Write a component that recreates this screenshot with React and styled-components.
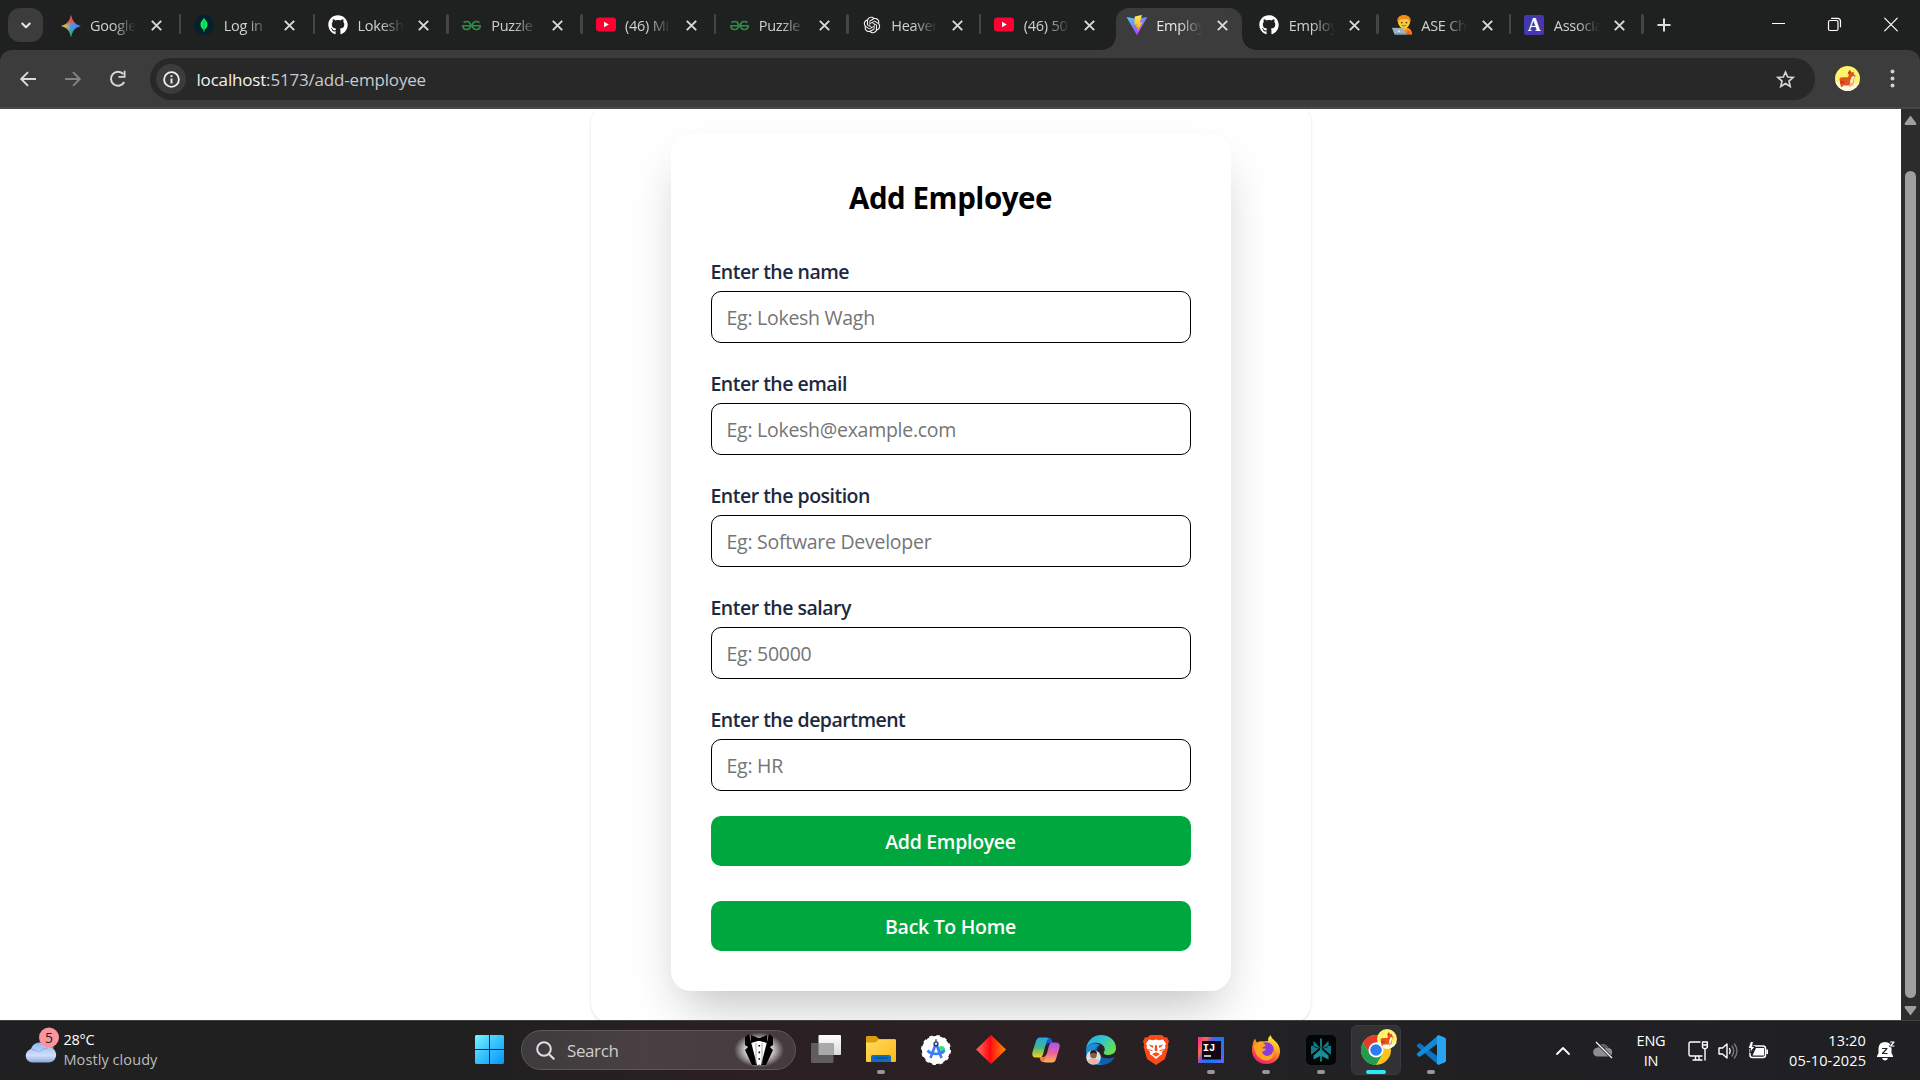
import React from "react";
import styled, { createGlobalStyle, css } from "styled-components";
import { FaGithub } from "react-icons/fa";
import { SiGeeksforgeeks } from "react-icons/si";
import { RiOpenaiFill } from "react-icons/ri";

const GlobalStyle = createGlobalStyle`
  * { box-sizing: border-box; }
  body { margin: 0; background: #fff; overflow: hidden; }
  body, input, button { font-family: "Open Sans", "Noto Sans", sans-serif; }
  svg { display: block; flex: none; overflow: visible; }
`;

const Screen = styled.div`
  display: flex;
  flex-direction: column;
  width: 1920px;
  height: 1080px;
  overflow: hidden;
`;

/* ---------- Tab strip ---------- */

const TabStrip = styled.header`
  display: flex;
  height: 50px;
  flex: none;
  background: #1f2120;
`;

const TabSearch = styled.div`
  display: grid;
  place-items: center;
  width: 35px;
  height: 34px;
  margin: 8px 3.5px 0 8px;
  border-radius: 12px;
  background: #3c3c3c;
`;

const Tab = styled.div`
  position: relative;
  display: flex;
  align-items: flex-start;
  width: ${(p) => p.$width}px;
  height: 50px;
  padding: 15px 0 0 14px;
  flex: none;

  ${(p) =>
    p.$active &&
    css`
      z-index: 1;
      &::before {
        content: "";
        position: absolute;
        z-index: -1;
        inset: 7.5px 3px 0 3px;
        border-radius: 13px 13px 0 0;
        background: #3c3c3c;
      }
    `}
`;

const Flare = styled.i`
  position: absolute;
  bottom: 0;
  ${(p) => p.$side}: -11px;
  width: 14px;
  height: 14px;
  background: radial-gradient(
    circle at ${(p) => (p.$side === "left" ? "0 0" : "100% 0")},
    transparent 13.5px,
    #3c3c3c 14px
  );
`;

const Favicon = styled.span`
  display: grid;
  place-items: center;
  width: 20px;
  height: 20px;
`;

const TabTitle = styled.span`
  width: 46px;
  margin: 1px 0 0 9.5px;
  white-space: nowrap;
  font-size: 14.5px;
  line-height: 20px;
  letter-spacing: -0.25px;
  color: ${(p) => (p.$active ? "#e8e8e8" : "#cfd0d0")};
  mask-image: linear-gradient(90deg, #000 50%, transparent 100%);
`;

const TabClose = styled.span`
  width: 11px;
  margin: 4.5px 0 0 14.5px;
`;

const Separator = styled.i`
  position: absolute;
  top: 14px;
  right: -1px;
  width: 2.5px;
  height: 20px;
  border-radius: 2px;
  background: #444645;
`;

const NewTab = styled.div`
  margin: 18px 0 0 14px;
`;

const WindowControls = styled.div`
  display: flex;
  gap: 43px;
  margin: 17px 22.5px 0 auto;
`;

/* ---------- Toolbar ---------- */

const ToolbarWrap = styled.div`
  flex: none;
  background: #1f2120;
`;

const Toolbar = styled.nav`
  display: flex;
  align-items: flex-start;
  height: 59px;
  padding: 8px 22px 0 17.5px;
  border-radius: 12px 12px 0 0;
  border-bottom: 2px solid #494747;
  background: #3c3c3c;
`;

const NavButtons = styled.div`
  display: flex;
  align-items: center;
  gap: 25px;
  width: 132.5px;
  height: 42px;
`;

const UrlBar = styled.div`
  display: flex;
  align-items: center;
  width: 1664.5px;
  height: 42px;
  padding: 0 20px 0 6px;
  border-radius: 21px;
  background: #282828;
`;

const SiteInfo = styled.span`
  display: grid;
  place-items: center;
  width: 30px;
  height: 30px;
  border-radius: 50%;
  background: #3c3c3c;
`;

const Url = styled.span`
  margin-left: 10.5px;
  padding-top: 2px;
  flex: 1;
  font-size: 17px;
  line-height: 24px;
  letter-spacing: -0.18px;
  color: #c6cbd3;

  b { font-weight: 400; color: #f2f2f2; }
`;

const ProfileButton = styled.span`
  margin: 7.5px 0 0 20.5px;
`;

const MenuButton = styled.span`
  margin: 11px 0 0 auto;
  padding-right: 3px;
`;

/* ---------- Page ---------- */

const Viewport = styled.main`
  display: flex;
  height: 911px;
  flex: none;
  overflow: hidden;
`;

const Page = styled.div`
  display: flex;
  justify-content: center;
  align-items: flex-start;
  width: 1901px;
  overflow: hidden;
  background: #fff;
`;

const OuterCard = styled.section`
  width: 720px;
  height: 920px;
  margin-top: -6px;
  padding: 31px 80px;
  border-radius: 20px;
  background: #fff;
  box-shadow: 0 1px 3px rgba(0, 0, 0, 0.12), 0 1px 2px -1px rgba(0, 0, 0, 0.1);
`;

const Card = styled.form`
  display: flex;
  flex-direction: column;
  height: 857px;
  padding: 40px;
  border-radius: 20px;
  background: #fff;
  box-shadow: 0 25px 50px -12px rgba(0, 0, 0, 0.25);
`;

const Title = styled.h1`
  flex: none;
  height: 40px;
  margin: 4px 0 39px;
  font-size: 29.5px;
  line-height: 40px;
  font-weight: 700;
  letter-spacing: -0.45px;
  text-align: center;
  color: #000;
`;

const Field = styled.div`
  display: flex;
  flex: none;
  flex-direction: column;
  margin-bottom: ${(p) => (p.$last ? 25 : 26)}px;
`;

const Label = styled.label`
  height: 34px;
  padding-top: 1px;
  font-size: 19.5px;
  line-height: 28px;
  font-weight: 600;
  letter-spacing: -0.51px;
  color: #1d293d;
`;

const Input = styled.input`
  height: 52px;
  padding: 0 15px;
  border: 1.25px solid #000;
  border-radius: 10px;
  outline: none;
  background: #fff;
  font-size: 19.5px;
  letter-spacing: -0.27px;

  &::placeholder { color: #757575; opacity: 1; }
`;

const Button = styled.button`
  flex: none;
  height: 50px;
  margin: 0 0 35px;
  padding: 1px 0 0;
  border: 0;
  border-radius: 10px;
  background: #00a63e;
  font-size: 19.5px;
  font-weight: 600;
  letter-spacing: -0.3px;
  color: #fff;

  &:last-child { margin-bottom: 0; }
`;

const ScrollTrack = styled.aside`
  display: flex;
  flex-direction: column;
  align-items: center;
  width: 19px;
  padding: 6px 0 4px;
  background: #2c2c2c;
`;

const ScrollThumb = styled.div`
  width: 11px;
  height: 827px;
  margin: 46px 0 8px;
  border-radius: 6px;
  background: #9f9f9f;
`;

/* ---------- Taskbar ---------- */

const Taskbar = styled.footer`
  display: flex;
  height: 60px;
  flex: none;
  border-top: 1px solid #414143;
  background: linear-gradient(
    90deg,
    #202022 0,
    #202021 480px,
    #2b1f22 720px,
    #2a2024 860px,
    #2b2023 1060px,
    #222124 1260px,
    #202023 1500px,
    #202025 1700px,
    #202023 100%
  );
`;

const Weather = styled.div`
  display: flex;
  width: 461.5px;
  padding: 6px 0 0 24.5px;
  gap: 5px;
`;

const WeatherText = styled.div`
  padding-top: 3px;
  font-size: 14.5px;
  line-height: 20px;
  letter-spacing: 0.08px;
  color: #bdbdbe;

  strong { display: block; font-weight: 400; letter-spacing: -0.3px; color: #fff; }
`;

const TaskSlot = styled.div`
  position: relative;
  display: flex;
  justify-content: center;
  align-items: flex-start;
  width: 55px;
  padding-top: 14px;

  ${(p) =>
    p.$state === "active" &&
    css`
      height: 50px;
      width: 50px;
      margin: 4px 2.5px 0;
      border: 1px solid #3b393c;
      border-radius: 6px;
      background: #333134;
      padding-top: 9px;
    `}

  &::after {
    content: "";
    display: ${(p) => (p.$state ? "block" : "none")};
    position: absolute;
    left: 50%;
    top: ${(p) => (p.$state === "active" ? 44 : 49)}px;
    width: ${(p) => (p.$state === "active" ? 20 : 8)}px;
    height: 4px;
    transform: translateX(-50%);
    border-radius: 2px;
    background: ${(p) => (p.$state === "active" ? "#29e8fb" : "#98969a")};
  }
`;

const AvatarBadge = styled.span`
  position: absolute;
  top: 3px;
  right: 3px;
`;

const SearchBox = styled.div`
  display: flex;
  align-items: center;
  width: 275px;
  height: 40px;
  margin: 9px 2.5px 0 4.5px;
  padding: 0 17px 0 14px;
  border: 1px solid #605759;
  border-radius: 20px;
  background: linear-gradient(90deg, #3c3b3d, #4a4043 45%, #453a3d);
`;

const SearchLabel = styled.span`
  flex: 1;
  margin-left: 12px;
  font-size: 17px;
  letter-spacing: -0.4px;
  color: #d0cdce;
`;

const Tray = styled.div`
  display: flex;
  align-items: center;
  margin-left: auto;
  padding-right: 25px;
  color: #fff;
`;

const TrayItem = styled.span`
  margin-right: ${(p) => p.$gap}px;
`;

const TrayText = styled.div`
  width: ${(p) => p.$width}px;
  margin-right: ${(p) => p.$gap}px;
  font-size: 14.5px;
  line-height: 20px;
  letter-spacing: ${(p) => p.$spacing}px;
  text-align: ${(p) => p.$align};
  white-space: nowrap;
`;

/* ---------- Icons ---------- */

const line = { fill: "none", stroke: "currentColor", strokeLinecap: "round", strokeLinejoin: "round" };

const Gemini = () => (
  <svg width="20" height="22" viewBox="0 0 20 22">
    <defs>
      <linearGradient id="gm" x1="0" y1="0.5" x2="1" y2="0.5">
        <stop offset="0" stopColor="#fcc818" />
        <stop offset=".25" stopColor="#c4bf45" />
        <stop offset=".5" stopColor="#4a95ee" />
        <stop offset="1" stopColor="#3a80fb" />
      </linearGradient>
      <linearGradient id="gm2" x1="0" y1="0" x2="0" y2="1">
        <stop offset="0" stopColor="#f5453a" />
        <stop offset=".3" stopColor="#f5504a" />
        <stop offset=".46" stopColor="#ee5c50" stopOpacity="0" />
        <stop offset=".62" stopColor="#20b45c" stopOpacity="0" />
        <stop offset=".85" stopColor="#20b45c" />
      </linearGradient>
    </defs>
    {["url(#gm)", "url(#gm2)"].map((fill) => (
      <path key={fill} fill={fill} d="M10 0c1.200 6 4 9.500 10 11-6 1.500-8.800 5-10 11C8.800 16 6 12.500 0 11 6 9.500 8.800 6 10 0z" />
    ))}
  </svg>
);

const Mongo = () => (
  <svg width="20" height="20" viewBox="0 0 20 20">
    <circle cx="10" cy="10" r="10" fill="#04202d" />
    <path d="M10 2.800c.7 2 3.700 3.300 3.500 7.200-.2 3-2.400 4.300-3.100 5l-.2 2.200h-.4L9.600 15C8.900 14.300 6.700 13 6.500 10 6.300 6.100 9.300 4.800 10 2.800z" fill="#0cec62" />
    <path d="M10 5v11.500" stroke="#06a34a" strokeWidth=".6" />
  </svg>
);

const YouTube = () => (
  <svg width="20" height="16" viewBox="0 0 20 16">
    <rect y=".5" width="20" height="14" rx="3.2" fill="#ff0033" />
    <path d="M8 4.700 12.800 7.500 8 10.300z" fill="#fff" />
  </svg>
);

const Vite = () => (
  <svg width="20" height="20" viewBox="0 0 32 32">
    <defs>
      <linearGradient id="vt1" x1="0" y1="0" x2=".6" y2="1">
        <stop offset="0" stopColor="#41d1ff" />
        <stop offset="1" stopColor="#bd34fe" />
      </linearGradient>
      <linearGradient id="vt2" x1="0" y1="0" x2="0" y2="1">
        <stop offset="0" stopColor="#ffea83" />
        <stop offset=".2" stopColor="#ffdd35" />
        <stop offset="1" stopColor="#ffa800" />
      </linearGradient>
    </defs>
    <path fill="url(#vt1)" d="M31.600 4.700 16.800 31.200a.9.900 0 0 1-1.600 0L.1 4.700c-.4-.7.200-1.500 1-1.300l14.900 2.700 14.500-2.700c.9-.2 1.500.6 1.100 1.300z" />
    <path fill="url(#vt2)" d="M23.500 0 12.500 2.200l-.8 12.600c0 .4.400.7.800.6l3-.7-1 5.300 3.100-.8-1.300 7.800 8.500-15.500-4.300.8L23.800.5z" />
  </svg>
);

const Coder = () => (
  <svg width="20" height="20" viewBox="0 0 20 20">
    <path d="M5 18c0-4 3-6 7-6s8 2 8 7.500H7z" fill="#ff8a1f" />
    <path d="M10 11h5v3l-2.500 1.500L10 14z" fill="#f7b62d" />
    <ellipse cx="12" cy="7.300" rx="6" ry="5.800" fill="#fccb3c" />
    <path d="M5.300 7C4.800 2.500 8 0 12 0s7.400 2.500 6.700 7C17.500 4.500 15 4 12.500 4 9 4.200 6.500 5 5.300 7z" fill="#f08a19" />
    <circle cx="9.700" cy="7.600" r=".9" fill="#5b3a20" />
    <circle cx="14.500" cy="7.600" r=".9" fill="#5b3a20" />
    <path d="M10 10.300q2 1.400 4 0" fill="none" stroke="#b5541c" strokeWidth=".9" />
    <path d="m0 12.700 11.500.3L14 19.500H2.500z" fill="#9fb3be" />
    <path d="M2.500 18.600H15v1.400H3z" fill="#63869a" />
    <circle cx="7" cy="16.200" r="1" fill="#e7eff3" />
    <circle cx="16.500" cy="17.500" r="1.800" fill="#fb5a2e" />
  </svg>
);

const LetterTile = styled.span`
  display: grid;
  place-items: center;
  width: 20px;
  height: 20px;
  border-radius: 2px;
  background: #4338ac;
  color: #fff;
  font: 700 18px/20px "Liberation Serif", serif;
`;

const Corgi = ({ size }) => (
  <svg width={size} height={size} viewBox="0 0 25 25">
    <defs><clipPath id="corgiClip"><circle cx="12.500" cy="12.500" r="12.500" /></clipPath></defs>
    <g clipPath="url(#corgiClip)">
      <path fill="#fff36b" d="M0 0h25v25H0z" />
      <path fill="#faf8e8" d="M0 15.500c5 0 7 3 12 3s8-1 13-2v9H0z" />
      <path fill="#e2571d" d="M4.500 12.500q1-1.200 3-1.200h5.500l1-2.800-1-2 2-2.500 1 2.500 2.500-.7.500 2.700 1.700 1.500-1.700 3-1 5-4 1.500H8l-.7 1.500H6L5.200 18z" />
      <path fill="#c93f14" d="m15 4 1 2.500-2.500 2.200-.5-2.200zM5 14.500l5 1-.5 2H5.500z" />
      <path fill="#fff3e2" d="m17 10.200 3.200.3-1.400 2-1.300 4.500-2.500 1.500.3-4z" />
      <path fill="#e9b07c" d="M14.500 17.500h1.800v3.500h-1.800zM17 16.500h1.500v3H17z" />
    </g>
  </svg>
);

const CloseIcon = () => (
  <svg width="11" height="11" viewBox="0 0 11 11" color="#d9dada">
    <path {...line} strokeWidth="1.900" strokeLinecap="butt" d="m.8.8 9.400 9.400M10.200.8.8 10.200" />
  </svg>
);

const Windows = () => (
  <svg width="29" height="29" viewBox="0 0 29 29">
    <defs>
      <linearGradient id="win" x1="0" y1="0" x2="29" y2="29" gradientUnits="userSpaceOnUse">
        <stop offset="0" stopColor="#7af3ff" />
        <stop offset=".5" stopColor="#36c1fb" />
        <stop offset="1" stopColor="#0a93fb" />
      </linearGradient>
    </defs>
    <path fill="url(#win)" d="M1 0h13v14H0V1zM15 0h13l1 1v13H15zM0 15h14v14H1l-1-1zM15 15h14v13l-1 1H15z" />
  </svg>
);

const SearchIcon = () => (
  <svg width="19" height="19" viewBox="0 0 19 19" color="#e0dedf">
    <circle {...line} cx="8" cy="8" r="6.800" strokeWidth="2" />
    <path {...line} strokeWidth="2.200" d="m13 13.200 4.700 4.600" />
  </svg>
);

const Tuxedo = () => (
  <svg width="38" height="34" viewBox="0 0 38 34">
    <defs>
      <radialGradient id="glow">
        <stop offset=".45" stopColor="#fff" stopOpacity=".9" />
        <stop offset="1" stopColor="#fff" stopOpacity="0" />
      </radialGradient>
    </defs>
    <ellipse cx="19" cy="17" rx="25" ry="17.500" fill="url(#glow)" />
    <path fill="#fff" d="M12 6h14l-3 26h-8z" />
    <path fill="#000" d="m9 1-4 3v8l3 2-3 3 7 15h5L11 9zM29 1l4 3v8l-3 2 3 3-7 15h-5l6-23z" />
    <path fill="#000" d="m11 2 7 3h2l7-3v8l-7-2h-2l-7 2z" />
    <path stroke="#888" strokeWidth=".7" d="M16 10v21M22 10v21" />
    <path stroke="#000" strokeWidth="1.600" strokeDasharray="1.600 5" d="M19.300 12v20" />
  </svg>
);

const TaskView = () => (
  <svg width="30" height="28" viewBox="0 0 30 28">
    <defs>
      <linearGradient id="tv" x1="0" y1="0" x2="0" y2="1">
        <stop offset="0" stopColor="#fff" /><stop offset="1" stopColor="#d9d9d9" />
      </linearGradient>
    </defs>
    <rect x="7.500" width="22.500" height="20" rx="1" fill="url(#tv)" />
    <rect y="8" width="22.500" height="20" rx="1" fill="#5f5d5e" />
    <path d="M7.500 8h15v12h-15z" fill="#aaa9a9" />
  </svg>
);

const Explorer = () => (
  <svg width="30" height="28" viewBox="0 0 30 28">
    <defs>
      <linearGradient id="ex" x1="0" y1="0" x2="1" y2="1">
        <stop offset="0" stopColor="#ffdc62" /><stop offset="1" stopColor="#fdb813" />
      </linearGradient>
    </defs>
    <g transform="translate(0 1)">
      <path fill="#dd9c09" d="M0 1.200Q0 0 1.200 0H10l3.500 3.300H29V10H0z" />
      <path fill="url(#ex)" d="M0 6.500h9.500L13 3.300h16q1 0 1 1V25q0 1-1 1H1q-1 0-1-1z" />
      <path fill="#0b6fc2" d="M5 26v-5q0-2 2-2h16q2 0 2 2v5z" />
      <path stroke="#05488c" strokeWidth="1.300" d="M8.500 22h13" />
    </g>
  </svg>
);

const AndroidStudio = () => (
  <svg width="30" height="30" viewBox="0 0 30 30">
    <circle cx="15" cy="15" r="14" fill="#fff" />
    <circle cx="15" cy="15" r="14" fill="none" stroke="#fff" strokeWidth="2" strokeDasharray="3.600 3.730" />
    <path fill="#3ddc84" d="M17 13c3-3.500 7-2 7.200 2 0 3-2.500 5-4.700 3.500z" />
    <path stroke="#3d7df5" strokeWidth="2.700" fill="none" d="m14.500 9.500-5 13.500M15.500 9.500l5 13.500M6.500 15.500c4 4.500 13 4.500 17 0" />
    <circle cx="15" cy="8.800" r="2" fill="#cfe1fb" stroke="#16324a" strokeWidth="1.200" />
    <path stroke="#16324a" strokeWidth="1.200" d="M15 4.300v2.500" />
  </svg>
);

const Diamond = () => (
  <svg width="30" height="29" viewBox="0 0 30 29">
    <defs>
      <linearGradient id="dm">
        <stop offset=".15" stopColor="#ff5048" /><stop offset=".5" stopColor="#ff0010" />
        <stop offset=".52" stopColor="#ff1a10" /><stop offset="1" stopColor="#ff8c08" />
      </linearGradient>
    </defs>
    <path fill="url(#dm)" d="m15 0 15 14.500L15 29 0 14.500z" />
  </svg>
);

const Copilot = () => (
  <svg width="28" height="28" viewBox="0 0 28 28">
    <defs>
      <linearGradient id="cp1" x1="0" y1="0" x2="0" y2="1">
        <stop offset="0" stopColor="#26a6ec" /><stop offset=".5" stopColor="#43b885" /><stop offset="1" stopColor="#ffd314" />
      </linearGradient>
      <linearGradient id="cp2" x1="0" y1="0" x2="0" y2="1">
        <stop offset="0" stopColor="#a653ec" /><stop offset=".55" stopColor="#ee6497" /><stop offset="1" stopColor="#ffb54c" />
      </linearGradient>
    </defs>
    <g transform="translate(0 2)">
      <path fill="#1c58d0" d="M9 1h8q3 0 3.500 5h-4q-2 0-2.800 3z" />
      <path fill="url(#cp1)" d="M14 .5H8Q5 .5 4 4L.5 15Q-.8 20.500 4 20.500h4q2.200 0 3-3L14 6q1-4 3-5z" />
      <path fill="#f1774c" d="M19 25h-8q-3 0-3.500-5h4q2 0 2.800-3z" />
      <path fill="url(#cp2)" d="M14 25.500h6q3 0 4-3.500l3.500-11Q28.800 5.500 24 5.500h-4q-2.200 0-3 3L14 20q-1 4-3 5z" />
    </g>
  </svg>
);

const Edge = () => (
  <svg width="30" height="30" viewBox="0 0 30 30">
    <defs>
      <linearGradient id="eg" x1="0" y1="0" x2="1" y2=".6">
        <stop offset="0" stopColor="#2aa6e6" /><stop offset=".5" stopColor="#2fc4cf" /><stop offset="1" stopColor="#66e14e" />
      </linearGradient>
    </defs>
    <path fill="#0f5fb0" d="M0 15C2 8 9 7 14 10c-4 3-4 8 0 11s10 3 14.500 1C26 28 20 30 15 30 6 30 0 23 0 15z" />
    <path fill="#1c8cd8" d="M0 15C1 9 8 7 14 10c-6 1-7 8-3 13l4 7C6 30 0 23 0 15z" />
    <path fill="url(#eg)" d="M0 14C1 6 7 0 15 0c9 0 15 6 15 13 0 5-4 7-8 7-3 0-5-1-4-3 2-3 0-8-6-9C7 7 2 9 0 14z" />
    <circle cx="7.500" cy="22.500" r="7.300" fill="#cfe4ea" />
    <path fill="#efb1a8" d="M1.500 26q6-6 12 0a7.300 7.300 0 0 1-12 0z" />
    <circle cx="7.500" cy="20" r="3.300" fill="#8f5a42" />
    <path fill="#25201f" d="M4 19q0-4 3.500-4T11 19q-3-2-7 0z" />
  </svg>
);

const Brave = () => (
  <svg width="26" height="30" viewBox="0 0 26 30">
    <path fill="#fb4a16" d="M7 0h12l2.500 2.500L24 2.200l2 4-1 3 .3 3L22 24l-9 6-9-6L.7 12.200l.3-3-1-3 2-4 2.500.3z" />
    <path fill="#fff" d="m6 4.500 4 .8 3-.8 3 .8 4-.8 3 4-1 2.500.5 2-3.800 4.300.7 2-2.400 1.200-4 3.500-4-3.500-2.400-1.200.7-2L3.500 13l.5-2-1-2.500z" />
    <path fill="#fb4a16" d="m5.500 9.500 5 1.300-1 2.200zM20.500 9.500l-5 1.300 1 2.200zM12.200 10h1.600l.7 5.200L13 16.500l-1.500-1.300zM9 19l4-1.800 4 1.800-4 2.700z" />
    <path stroke="#fb4a16" strokeWidth="1" d="m5.500 14.500 4 1.300M20.500 14.500l-4 1.300" />
  </svg>
);

const IntelliJ = () => (
  <svg width="26" height="28" viewBox="0 0 26 28">
    <defs>
      <linearGradient id="ij" x1="0" y1=".2" x2="1" y2=".7">
        <stop offset="0" stopColor="#ff318c" /><stop offset=".2" stopColor="#fb6a48" /><stop offset=".35" stopColor="#7a52d8" />
        <stop offset=".6" stopColor="#087cfa" /><stop offset="1" stopColor="#5467f5" />
      </linearGradient>
    </defs>
    <g transform="translate(0 2)">
      <rect width="26" height="26" fill="url(#ij)" />
      <rect x="4" y="4" width="19" height="18.500" fill="#120615" />
      <text x="4.800" y="13.500" fontSize="10.500" fontWeight="700" fontFamily="Liberation Mono, monospace" fill="#fff">IJ</text>
      <path d="M6 19h7" stroke="#fff" strokeWidth="1.500" />
    </g>
  </svg>
);

const Firefox = () => (
  <svg width="28" height="29" viewBox="0 0 28 29">
    <defs>
      <linearGradient id="ff" x1=".8" y1="0" x2=".3" y2="1">
        <stop offset="0" stopColor="#fff24a" /><stop offset=".35" stopColor="#ffb320" />
        <stop offset=".65" stopColor="#ff5a3c" /><stop offset="1" stopColor="#f0187c" />
      </linearGradient>
    </defs>
    <path fill="url(#ff)" d="M16 6q0-4 2.500-6 1 3.500 4 5.500Q28 10 28 16c0 8-6 13-14 13S0 23 0 15.500Q0 8 3 3.500 3.500 6 5 7.500q3-2 6-1Z" />
    <circle cx="14.500" cy="14.500" r="7.200" fill="#8a3ddb" />
    <path fill="#ffa51f" d="M1.500 12Q3 8 8 7.500q3.500 0 6 3-3 1.500-4 2.500 1 1 4 .5-.5 2.500-4 3 1 4 5 4.500 5 0 6-5 2 5-2 8-5 3-10 0-5-3-6-8z" />
  </svg>
);

const Perplexity = () => (
  <svg width="30" height="30" viewBox="0 0 30 30">
    <rect width="30" height="30" rx="5" fill="#020606" />
    <path fill="#117c87" d="M14.400 13.200 7.500 5.800V11H5v9l9.400-7zM15.600 13.200l6.900-7.400V11H25v9l-9.400-7z" />
    <path fill="#15929e" d="M14.400 14.500 7.500 20.500v4l6.900-3.500zM15.600 14.500l6.900 6v4L15.600 21z" />
    <path stroke="#22aab7" strokeWidth="1.400" d="M15 3.500v23" />
    <path stroke="#020606" strokeWidth=".8" d="m5 20.500 9.400-8M25 20.500l-9.400-8M8 11.500l5.500 2M22 11.500l-5.500 2" />
  </svg>
);

const Chrome = () => (
  <svg width="30" height="30" viewBox="0 0 30 30">
    <circle cx="15" cy="15" r="15" fill="#fcc31e" />
    <path fill="#e33b2e" d="M2 7.500A15 15 0 0 1 28 7.500H15L8.500 18.800z" />
    <path fill="#1f9d50" d="M2 7.500 8.500 18.800 15 22.500l6.500-3.700L15 30A15 15 0 0 1 2 7.500z" />
    <circle cx="15" cy="15" r="7.500" fill="#fff" />
    <circle cx="15" cy="15" r="5.800" fill="#2b7cf0" />
  </svg>
);

const VSCode = () => (
  <svg width="30" height="30" viewBox="0 0 30 30">
    <path fill="#0b73c4" d="m1 10 1.700-1.500q.8-.6 1.600 0L22.500 22v8L1 11.500q-.8-.7 0-1.500z" />
    <path fill="#1389d8" d="m1 20 1.700 1.500q.8.600 1.600 0L22.500 8V0L1 18.500q-.8.700 0 1.500z" />
    <path fill="#27a4f2" d="M22.500 0 29 2.800q1 .5 1 1.500v21.400q0 1-1 1.500L22.500 30 21 28.500V1.500z" />
  </svg>
);

const WeatherIcon = () => (
  <svg width="34" height="38" viewBox="0 0 34 38">
    <defs>
      <linearGradient id="wc" x1="0" y1="0" x2="0" y2="1">
        <stop offset="0" stopColor="#8fb4f4" /><stop offset=".65" stopColor="#cfdffa" /><stop offset="1" stopColor="#8aa6dc" />
      </linearGradient>
    </defs>
    <circle cx="22" cy="20" r="6.500" fill="#f97316" />
    <path fill="url(#wc)" d="M7 35.500a6.800 6.800 0 0 1-1-13.400 9.300 9.300 0 0 1 17-2 7.600 7.600 0 0 1 1 15.400z" />
    <path fill="none" stroke="#7f9fdc" strokeWidth=".8" d="M7 22.500q4 0 6 2.500M14 25q4-4 9-4" />
    <circle cx="24" cy="10.500" r="10" fill="#fc949e" />
    <text x="24" y="15.500" fontSize="14" textAnchor="middle" fill="#222" fontFamily="Open Sans, sans-serif">5</text>
  </svg>
);

/* ---------- Data ---------- */

const TABS = [
  { title: "Google", icon: <Gemini /> },
  { title: "Log in", icon: <Mongo /> },
  { title: "Lokesh", icon: <FaGithub size={20} color="#fff" /> },
  { title: "Puzzle", icon: <SiGeeksforgeeks size={19} color="#2f8d46" /> },
  { title: "(46) Mi", icon: <YouTube /> },
  { title: "Puzzle", icon: <SiGeeksforgeeks size={19} color="#2f8d46" /> },
  { title: "Heaven", icon: <RiOpenaiFill size={20} color="#f0f0f0" /> },
  { title: "(46) 50", icon: <YouTube />, noSeparator: true },
  { title: "Employ", icon: <Vite />, active: true, noSeparator: true },
  { title: "Employ", icon: <FaGithub size={20} color="#fff" /> },
  { title: "ASE Ch", icon: <Coder /> },
  { title: "Associa", icon: <LetterTile>A</LetterTile> },
];

const FIELDS = [
  { label: "Enter the name", hint: "Eg: Lokesh Wagh" },
  { label: "Enter the email", hint: "Eg: Lokesh@example.com" },
  { label: "Enter the position", hint: "Eg: Software Developer" },
  { label: "Enter the salary", hint: "Eg: 50000" },
  { label: "Enter the department", hint: "Eg: HR" },
];

const APPS = [
  { name: "taskview", icon: <TaskView /> },
  { name: "explorer", icon: <Explorer />, state: "open" },
  { name: "android", icon: <AndroidStudio /> },
  { name: "diamond", icon: <Diamond /> },
  { name: "copilot", icon: <Copilot /> },
  { name: "edge", icon: <Edge /> },
  { name: "brave", icon: <Brave /> },
  { name: "intellij", icon: <IntelliJ />, state: "open" },
  { name: "firefox", icon: <Firefox />, state: "open" },
  { name: "perplexity", icon: <Perplexity />, state: "open" },
  { name: "chrome", icon: <Chrome />, state: "active" },
  { name: "vscode", icon: <VSCode />, state: "open" },
];

/* ---------- Sections ---------- */

const BrowserTabs = () => (
  <TabStrip>
    <TabSearch>
      <svg width="10" height="7" viewBox="0 0 10 7" color="#e6e6e6">
        <path {...line} strokeWidth="2" strokeLinecap="butt" d="m.7 1 4.300 4.300L9.300 1" />
      </svg>
    </TabSearch>
    {TABS.map((tab, i) => (
      <Tab key={i} $width={i < 5 ? 133.75 : 132.5} $active={tab.active}>
        <Favicon>{tab.icon}</Favicon>
        <TabTitle $active={tab.active}>{tab.title}</TabTitle>
        <TabClose><CloseIcon /></TabClose>
        {!tab.noSeparator && <Separator />}
        {tab.active && <><Flare $side="left" /><Flare $side="right" /></>}
      </Tab>
    ))}
    <NewTab>
      <svg width="14" height="14" viewBox="0 0 14 14" color="#dedede">
        <path {...line} strokeWidth="2" strokeLinecap="butt" d="M7 .5v13M.5 7h13" />
      </svg>
    </NewTab>
    <WindowControls>
      <svg width="13" height="14" viewBox="0 0 13 14" color="#fff">
        <path {...line} strokeWidth="1" strokeLinecap="butt" d="M0 6.500h13" />
      </svg>
      <svg width="13" height="14" viewBox="0 0 13 14" color="#fff">
        <rect {...line} x=".5" y="3.500" width="9.500" height="10" rx="1.500" strokeWidth="1.200" />
        <path {...line} strokeWidth="1.200" d="M3.500 1.300h6q3 0 3 3v5.500" />
      </svg>
      <svg width="14" height="14" viewBox="0 0 14 14" color="#fff">
        <path {...line} strokeWidth="1.200" d="m.7 1.200 12.600 12.600M13.300 1.200.7 13.800" />
      </svg>
    </WindowControls>
  </TabStrip>
);

const AddressBar = () => (
  <ToolbarWrap>
    <Toolbar>
      <NavButtons>
        <svg width="20" height="16" viewBox="0 0 18 16" color="#dadada">
          <path {...line} strokeWidth="1.900" strokeLinecap="butt" strokeLinejoin="miter" d="M17 8H2.500M9 1.200 2.200 8 9 14.800" />
        </svg>
        <svg width="20" height="16" viewBox="0 0 18 16" color="#838383">
          <path {...line} strokeWidth="1.900" strokeLinecap="butt" strokeLinejoin="miter" d="M1 8h14.500M9 1.200 15.800 8 9 14.800" />
        </svg>
        <svg width="20" height="18" viewBox="0 0 20 18" color="#dadada">
          <path {...line} strokeWidth="2" strokeLinecap="butt" d="M16.200 12a7 7 0 1 1-.9-7.800" />
          <path fill="currentColor" d="M17.500.8v7h-7V6h5.200V.8z" />
        </svg>
      </NavButtons>
      <UrlBar>
        <SiteInfo>
          <svg width="17" height="17" viewBox="0 0 17 17" color="#f0f0f0">
            <circle {...line} cx="8.500" cy="8.500" r="7.400" strokeWidth="1.800" />
            <path {...line} strokeWidth="1.900" strokeLinecap="butt" d="M8.500 7.500v5M8.500 4.200v1.900" />
          </svg>
        </SiteInfo>
        <Url><b>localhost</b>:5173/add-employee</Url>
        <svg width="19" height="19" viewBox="0 0 19 19" color="#d5d5d5">
          <path {...line} strokeWidth="1.700" strokeLinejoin="miter" d="m9.500 2 2.200 5 5.400.5-4.100 3.600 1.200 5.300-4.700-2.800-4.700 2.800L6 11.100 1.900 7.500l5.400-.5z" />
        </svg>
      </UrlBar>
      <ProfileButton><Corgi size={25} /></ProfileButton>
      <MenuButton>
        <svg width="5" height="19" viewBox="0 0 5 19" fill="#d0d0d0">
          <circle cx="2.500" cy="2.500" r="2" /><circle cx="2.500" cy="9.500" r="2" /><circle cx="2.500" cy="16.500" r="2" />
        </svg>
      </MenuButton>
    </Toolbar>
  </ToolbarWrap>
);

const EmployeeForm = () => (
  <OuterCard>
    <Card>
      <Title>Add Employee</Title>
      {FIELDS.map((f, i) => (
        <Field key={f.label} $last={i === FIELDS.length - 1}>
          <Label>{f.label}</Label>
          <Input placeholder={f.hint} />
        </Field>
      ))}
      <Button type="button">Add Employee</Button>
      <Button type="button">Back To Home</Button>
    </Card>
  </OuterCard>
);

const DesktopTaskbar = () => (
  <Taskbar>
    <Weather>
      <WeatherIcon />
      <WeatherText><strong>28°C</strong>Mostly cloudy</WeatherText>
    </Weather>
    <TaskSlot><Windows /></TaskSlot>
    <SearchBox>
      <SearchIcon />
      <SearchLabel>Search</SearchLabel>
      <Tuxedo />
    </SearchBox>
    {APPS.map((app) => (
      <TaskSlot key={app.name} $state={app.state}>
        {app.icon}
        {app.state === "active" && <AvatarBadge><Corgi size={20} /></AvatarBadge>}
      </TaskSlot>
    ))}
    <Tray>
      <TrayItem $gap={23}>
        <svg width="14" height="8" viewBox="0 0 14 8"><path {...line} strokeWidth="1.800" d="m1 7 6-6 6 6" /></svg>
      </TrayItem>
      <TrayItem $gap={22}>
        <svg width="20" height="17" viewBox="0 0 20 17">
          <path fill="#8e8e90" d="M4.500 14.500a4.400 4.400 0 0 1 0-8.800A6 6 0 0 1 15.500 6a4.300 4.300 0 0 1 0 8.500z" />
          <path fill="#5f5f62" d="M5 5.500A6 6 0 0 1 15.500 6q-3 0-4.500 2Q8.500 5 5 5.500z" />
          <path stroke="#202023" strokeWidth="2.800" d="m3 0 16 16" />
          <path stroke="#fff" strokeWidth="1.200" d="m3 0 16 16" />
        </svg>
      </TrayItem>
      <TrayText $width={32} $gap={21} $align="center" $spacing={-0.2}>ENG<br />IN</TrayText>
      <TrayItem $gap={10}>
        <svg width="20" height="20" viewBox="0 0 20 20">
          <path {...line} strokeWidth="1.400" d="M12 1H2.500Q1 1 1 2.500v11Q1 15 2.500 15H14M5 19h9M7.500 15v4M11 15v4M17 8v11" />
          <path {...line} strokeWidth="1.400" d="M14.500 1h4.800v5.500q-2.400 2.500-4.800 0zM14.500 4h4.800" />
        </svg>
      </TrayItem>
      <TrayItem $gap={10}>
        <svg width="20" height="18" viewBox="0 0 20 18">
          <path {...line} strokeWidth="1.400" d="M1 6h3.500L9 2v14l-4.500-4H1zM11.500 6.500q1.500 2.500 0 5" />
          <path {...line} stroke="#77777a" strokeWidth="1.400" d="M14 4q3.500 5 0 10M16.500 2q5 7 0 14" />
        </svg>
      </TrayItem>
      <TrayItem $gap={21}>
        <svg width="20" height="17" viewBox="0 0 20 17">
          <rect {...line} x="2" y="4" width="15.500" height="11.500" rx="2.500" strokeWidth="1.500" />
          <path fill="currentColor" d="M4.500 13.500 8 6h8v7.500zM18.300 7.500H20v4.500h-1.700z" />
          <path fill="#fff" stroke="#202025" strokeWidth="1" d="M2.500-.5 0 6.500h2.500L2 11l5-6.500H4.500l1-5z" />
        </svg>
      </TrayItem>
      <TrayText $width={77} $gap={11} $align="right" $spacing={0.15}>13:20<br />05-10-2025</TrayText>
      <svg width="18" height="20" viewBox="0 0 18 20">
        <path fill="currentColor" d="M8 1q6 0 6.500 6v5l1.500 3v1H0v-1l1.500-3V7Q2 1 8 1zM5 17h6q-1 2.500-3 2.500T5 17z" />
        <path {...line} stroke="#202023" strokeWidth="1.200" d="M5.500 7.500H10l-4.500 5H10" />
        <path {...line} stroke="#202023" strokeWidth="2.600" d="M13.500 1H17l-3.500 4H17" />
        <path {...line} strokeWidth="1.200" d="M13.500 1H17l-3.500 4H17" />
      </svg>
    </Tray>
  </Taskbar>
);

export default function App() {
  return (
    <>
      <GlobalStyle />
      <Screen>
        <BrowserTabs />
        <AddressBar />
        <Viewport>
          <Page><EmployeeForm /></Page>
          <ScrollTrack>
            <svg width="13" height="10" viewBox="0 0 13 10" fill="#9f9f9f"><path d="M6.500.500 12.500 8.500 11.800 10H1.200L.5 8.500z" /></svg>
            <ScrollThumb />
            <svg width="13" height="10" viewBox="0 0 13 10" fill="#9f9f9f"><path d="M6.500 9.500.5 1.500 1.200 0h10.600l.7 1.500z" /></svg>
          </ScrollTrack>
        </Viewport>
        <DesktopTaskbar />
      </Screen>
    </>
  );
}
